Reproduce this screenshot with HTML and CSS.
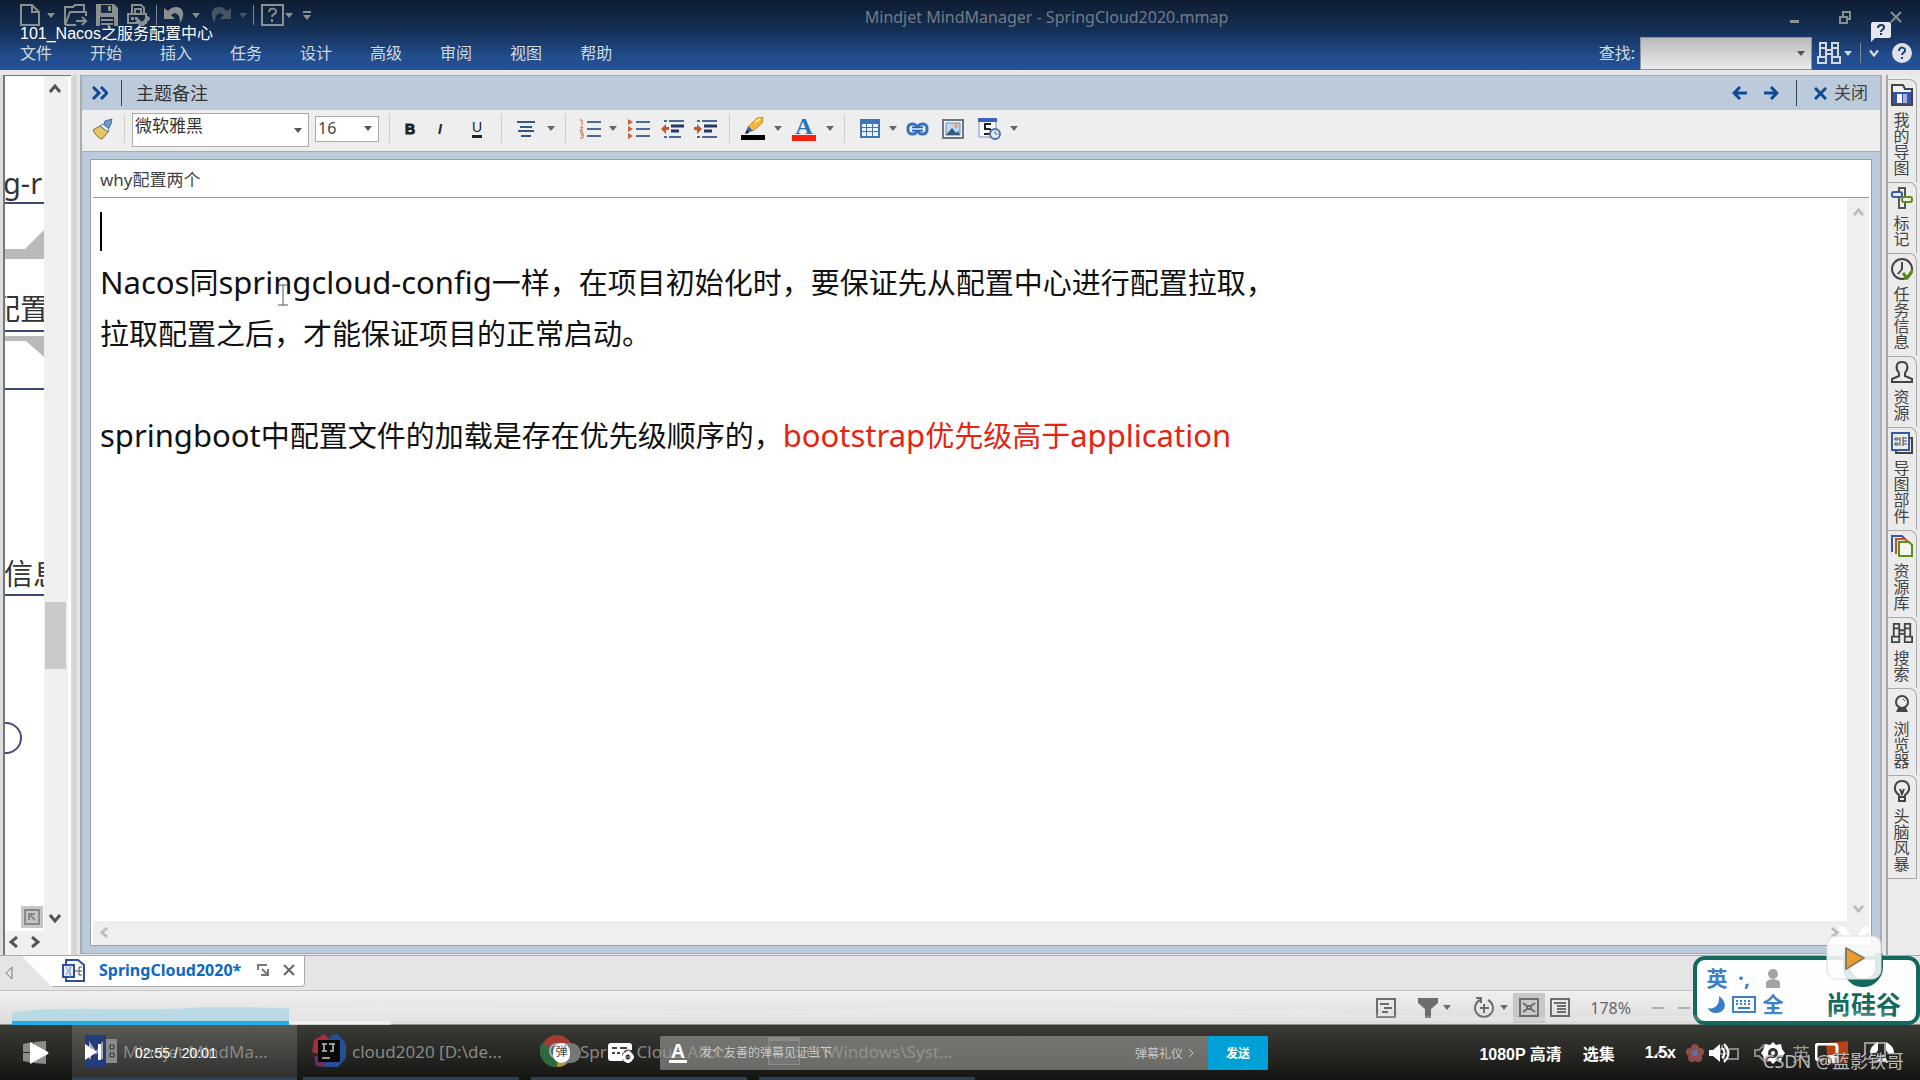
FILE: index.html
```html
<!DOCTYPE html>
<html lang="zh-CN">
<head>
<meta charset="utf-8">
<meta name="viewport" content="width=device-width, initial-scale=1">
<title>101_Nacos之服务配置中心</title>
<link rel="stylesheet" href="styles.css">
</head>
<body>
<svg class="defs" aria-hidden="true">
  <symbol id="caret" viewBox="0 0 8 5"><path d="M0 0h8L4 5z" fill="currentColor"/></symbol>
  <symbol id="chev-up" viewBox="0 0 12 10"><path d="M1 8l5-6 5 6" fill="none" stroke="currentColor" stroke-width="3"/></symbol>
  <symbol id="chev-down" viewBox="0 0 12 10"><path d="M1 2l5 6 5-6" fill="none" stroke="currentColor" stroke-width="3"/></symbol>
  <symbol id="chev-left" viewBox="0 0 10 12"><path d="M8 1L2 6l6 5" fill="none" stroke="currentColor" stroke-width="3"/></symbol>
  <symbol id="chev-right" viewBox="0 0 10 12"><path d="M2 1l6 5-6 5" fill="none" stroke="currentColor" stroke-width="3"/></symbol>
  <symbol id="binoculars" viewBox="0 0 24 22"><g fill="none" stroke="currentColor" stroke-width="2"><path d="M3 1h6v5H3zM15 1h6v5h-6zM3 6v9M21 6v9M9 6v9M15 6v9M9 8h6v4H9zM1 15h8v6H1zM15 15h8v6h-8z"/></g></symbol>
</svg>
<div class="screen">
  <header class="titlebar">
    <div class="quick">
      <button aria-label="新建"><svg width="20" height="22"><path d="M1 1h11l7 7v13H1zM12 1v7h7" fill="none" stroke="currentColor" stroke-width="2"/></svg></button>
      <button aria-label="新建选项"><svg width="8" height="5"><use href="#caret"/></svg></button>
      <button aria-label="打开"><svg width="24" height="22"><path d="M1 21V3h8l2-2h9v6M1 21L6 8h16v4M1 21h11M12 17h9M18 13l4 4-4 4" fill="none" stroke="currentColor" stroke-width="2"/></svg></button>
      <button aria-label="保存"><svg width="22" height="22"><path d="M0 0h18l4 4v18H0z" fill="currentColor"/><path d="M5 1h11v8H5zM4 13h14v9H4z" fill="#12284a"/><path d="M12 2h3v5h-3zM5 15h12v2H5zM5 19h12v2H5z" fill="currentColor"/></svg></button>
      <button aria-label="打印"><svg width="24" height="22"><path d="M6 10V1h9l3 3v6M2 10h18v9H2zM9 5h6v5H9z" fill="none" stroke="currentColor" stroke-width="2"/><path d="M5 13h3v3H5zM9 13h3v3H9z" fill="currentColor"/><path d="M11 16l5 5 7-8" fill="none" stroke="currentColor" stroke-width="4"/></svg></button>
      <i class="rule"></i>
      <button aria-label="撤销"><svg width="21" height="19"><path d="M0 2v11h11L7 9c5-4 9-1 9 8 6-9 3-16-4-16-4 0-6 2-8 4z" fill="currentColor"/></svg></button>
      <button aria-label="撤销选项"><svg width="8" height="5"><use href="#caret"/></svg></button>
      <button class="dim" aria-label="重做"><svg width="21" height="19"><path d="M21 2v11H10l4-4C9 5 5 8 5 17-1 8 2 1 9 1c4 0 6 2 8 4z" fill="currentColor"/></svg></button>
      <button class="dim" aria-label="重做选项"><svg width="8" height="5"><use href="#caret"/></svg></button>
      <i class="rule"></i>
      <button aria-label="帮助"><svg width="23" height="22"><path d="M1 1h21v20H1z" fill="none" stroke="currentColor" stroke-width="2"/><path d="M8 8c0-5 8-4 7 0-1 3-4 2-4 5m0 2v3" fill="none" stroke="currentColor" stroke-width="2"/></svg></button>
      <button aria-label="帮助选项"><svg width="8" height="5"><use href="#caret"/></svg></button>
      <button aria-label="自定义"><svg width="8" height="9"><path d="M0 0h8v2H0zM0 4h8L4 9z" fill="currentColor"/></svg></button>
      <h1 class="app-name">Mindjet MindManager - SpringCloud2020.mmap</h1>
      <div class="win">
        <button aria-label="最小化"><svg width="10" height="12"><path d="M0 9h9v3H0z" fill="currentColor"/></svg></button>
        <button aria-label="还原"><svg width="12" height="13"><path d="M1 6h7v6H1zM4 6V1h7v7H8" fill="none" stroke="currentColor" stroke-width="2"/></svg></button>
        <button aria-label="关闭窗口"><svg width="12" height="12"><path d="M1 1l10 10M11 1L1 11" stroke="currentColor" stroke-width="2"/></svg></button>
      </div>
    </div>
    <nav class="ribbon">
      <a href="#">文件</a><a href="#">开始</a><a href="#">插入</a><a href="#">任务</a><a href="#">设计</a><a href="#">高级</a><a href="#">审阅</a><a href="#">视图</a><a href="#">帮助</a>
      <div class="find">
        <label for="find">查找:</label>
        <span class="combo find-box"><input id="find" type="text"><svg width="8" height="5"><use href="#caret"/></svg></span>
        <button aria-label="搜索"><svg width="24" height="22"><use href="#binoculars"/></svg></button>
        <button class="find-caret" aria-label="搜索选项"><svg width="8" height="5"><use href="#caret"/></svg></button>
        <i class="rule"></i>
        <button class="find-more" aria-label="折叠"><svg width="10" height="8"><use href="#chev-down"/></svg></button>
        <button aria-label="帮助主题"><svg width="20" height="20"><circle cx="10" cy="10" r="10" fill="#dfe2e6"/><path d="M7 8c0-5 7-4 6 0-1 2-3 2-3 4m0 2v2" fill="none" stroke="#1c4079" stroke-width="2"/></svg></button>
      </div>
    </nav>
  </header>

  <main class="workspace">
    <section class="map">
      <div class="canvas">
        <svg width="39" height="850" aria-label="导图">
          <path d="M0 173h20l19-19v29H0zM0 260h39v21L21 265H0z" fill="#bababa"/>
          <path d="M0 127h39M0 255h39M0 313h39M0 519h39" stroke="#3b4a78" stroke-width="2"/>
          <circle cx="1" cy="662" r="15" fill="none" stroke="#4a4a78" stroke-width="2"/>
          <text x="-2" y="118">g-r</text><text x="-14" y="244">配置</text><text x="-1" y="509">信息</text>
        </svg>
        <button class="fit" aria-label="适合窗口"><svg width="16" height="16"><path d="M1 1h14v14H1zM5 11V5h6M5 5l6 6" fill="none" stroke="currentColor" stroke-width="2"/></svg></button>
      </div>
      <div class="map-pan"><svg width="10" height="12"><use href="#chev-left"/></svg><svg width="10" height="12"><use href="#chev-right"/></svg></div>
      <div class="map-scroll"><svg width="12" height="10"><use href="#chev-up"/></svg><i class="thumb"></i><svg width="12" height="10"><use href="#chev-down"/></svg></div>
    </section>

    <section class="notes">
      <header class="notes-head">
        <button aria-label="折叠面板"><svg width="16" height="14"><path d="M1 1l6 6-6 6M9 1l6 6-6 6" fill="none" stroke="currentColor" stroke-width="3"/></svg></button>
        <i class="bar"></i>
        <h2>主题备注</h2>
        <div class="head-right">
          <button aria-label="上一个"><svg width="15" height="14"><path d="M15 7H2M8 1L2 7l6 6" fill="none" stroke="currentColor" stroke-width="3"/></svg></button>
          <button aria-label="下一个"><svg width="15" height="14"><path d="M0 7h13M7 1l6 6-6 6" fill="none" stroke="currentColor" stroke-width="3"/></svg></button>
          <i class="bar"></i>
          <button class="close"><svg width="13" height="13"><path d="M1 1l11 11M12 1L1 12" stroke="currentColor" stroke-width="3"/></svg><span>关闭</span></button>
        </div>
      </header>

      <div class="tools">
        <button aria-label="格式刷"><svg width="21" height="22"><path d="M1 12l7-4 8 6-6 7c-4-1-7-5-9-9z" fill="#e6c763" stroke="#7d6a35"/><path d="M8 8l3-2 6 5-1 3z" fill="#e9eef5" stroke="#67788f"/><path d="M12 6l1-3 7-2-1 5-2 4z" fill="#6f9bd0" stroke="#4a6f9f"/></svg></button>
        <i class="sep"></i>
        <span class="combo font"><select aria-label="字体"><option>微软雅黑</option></select><svg width="8" height="5"><use href="#caret"/></svg></span>
        <span class="combo size"><select aria-label="字号"><option>16</option></select><svg width="8" height="5"><use href="#caret"/></svg></span>
        <i class="sep"></i>
        <button class="glyph bold">B</button>
        <button class="glyph italic">I</button>
        <button class="glyph under">U</button>
        <i class="sep"></i>
        <button aria-label="对齐"><svg width="18" height="16"><path d="M0 1h18M3 6h12M1 10h16M4 15h10" stroke="#35587f" stroke-width="2"/></svg></button>
        <button aria-label="对齐选项"><svg width="8" height="5"><use href="#caret"/></svg></button>
        <i class="sep"></i>
        <button aria-label="编号列表"><svg width="22" height="20"><path d="M8 3h14M8 10h14M8 17h14" stroke="#4d6a8e" stroke-width="2"/><path d="M1 1h2v5M1 8h3L1 12h3M1 14h3v5H1M2 16h2" fill="none" stroke="#c8643c"/></svg></button>
        <button aria-label="编号选项"><svg width="8" height="5"><use href="#caret"/></svg></button>
        <button aria-label="项目符号"><svg width="22" height="20"><path d="M8 3h14M8 10h14M8 17h14" stroke="#4d6a8e" stroke-width="2"/><path d="M0 0l5 3-5 3zM0 7l5 3-5 3zM0 14l5 3-5 3z" fill="#c8643c"/></svg></button>
        <button aria-label="减少缩进"><svg width="24" height="20"><path d="M3 2h3M8 2h15M3 18h3M8 18h12" stroke="#4d6a8e" stroke-width="2"/><path d="M10 7h13M10 12h8" stroke="#1f3a66" stroke-width="3"/><path d="M0 10l5-5v3h3v3H5v4z" fill="#c8552c"/></svg></button>
        <button aria-label="增加缩进"><svg width="24" height="20"><path d="M3 2h3M8 2h15M3 18h3M8 18h15" stroke="#4d6a8e" stroke-width="2"/><path d="M10 7h13M10 12h8" stroke="#1f3a66" stroke-width="3"/><path d="M8 10L3 5v3H0v3h3v4z" fill="#c8552c"/></svg></button>
        <i class="sep"></i>
        <button aria-label="突出显示"><svg width="24" height="24"><path d="M0 18h24v5H0z" fill="#000"/><path d="M7 10L16 1l6-1-1 6-9 8z" fill="#f5b83c" stroke="#c8882a"/><path d="M14 5l5-3" stroke="#fff0b0" stroke-width="2"/><path d="M7 9l5 5-7 2z" fill="#2a69b8"/><path d="M4 17l2-5 2 4z" fill="#123"/></svg></button>
        <button aria-label="突出显示选项"><svg width="8" height="5"><use href="#caret"/></svg></button>
        <button class="font-color" aria-label="字体颜色"><span>A</span></button>
        <button aria-label="颜色选项"><svg width="8" height="5"><use href="#caret"/></svg></button>
        <i class="sep"></i>
        <button aria-label="表格"><svg width="20" height="19"><path d="M0 0h20v19H0z" fill="#3e74b8"/><path d="M2 5h4v3H2zM7 5h5v3H7zM13 5h5v3h-5zM2 9h4v3H2zM7 9h5v3H7zM13 9h5v3h-5zM2 13h4v4H2zM7 13h5v4H7zM13 13h5v4h-5z" fill="#eaf3fc"/></svg></button>
        <button aria-label="表格选项"><svg width="8" height="5"><use href="#caret"/></svg></button>
        <button aria-label="超链接"><svg width="23" height="14"><g fill="none"><rect x="2" y="2" width="9" height="10" rx="4" stroke="#3571bd" stroke-width="3"/><rect x="12" y="2" width="9" height="10" rx="4" stroke="#3571bd" stroke-width="3"/><path d="M6 7h11" stroke="#2a60aa" stroke-width="5"/><path d="M6 7h11" stroke="#a9cdf3" stroke-width="2"/></g></svg></button>
        <button aria-label="图片"><svg width="22" height="20"><path d="M1 1h20v18H1z" fill="#f4f4f4" stroke="#6b7684" stroke-width="2"/><path d="M4 4h14v12H4z" fill="#bcd9f5" stroke="#7188a6"/><path d="M4 16l6-7 4 5 2-2 2 4z" fill="#39597f"/><circle cx="14" cy="7" r="2" fill="#efa06f"/></svg></button>
        <button aria-label="日期时间"><svg width="23" height="22"><path d="M1 1h17v18H1z" fill="#f5f8fc" stroke="#7e94b5"/><path d="M0 0h19v4H0z" fill="#3964bd"/><path d="M13 6H7v5h4c3 0 3 5-1 5H6" fill="none" stroke="#222" stroke-width="2"/><circle cx="17" cy="16" r="5" fill="#e4ecf7" stroke="#54719e" stroke-width="2"/><path d="M17 13v3h3" fill="none" stroke="#54719e"/></svg></button>
        <button aria-label="日期选项"><svg width="8" height="5"><use href="#caret"/></svg></button>
      </div>

      <div class="page">
        <div class="sheet">
          <input class="topic" type="text" value="why配置两个" aria-label="主题">
          <div class="sheet-body">
            <article class="note" contenteditable="true" spellcheck="false">
              <p><i class="text-caret"></i></p>
              <p><span class="latin">Nacos</span>同<span class="latin">springcloud-config</span>一样，在项目初始化时，要保证先从配置中心进行配置拉取，</p>
              <p>拉取配置之后，才能保证项目的正常启动。</p>
              <p></p>
              <p><span class="latin">springboot</span>中配置文件的加载是存在优先级顺序的，<span class="red"><span class="latin">bootstrap</span>优先级高于<span class="latin">application</span></span></p>
              <svg class="ibeam" width="10" height="22"><path d="M0 1h10M0 21h10M5 1v20" stroke="#555" stroke-width="1"/></svg>
            </article>
            <div class="vscroll"><svg width="11" height="9"><use href="#chev-up"/></svg><svg width="11" height="9"><use href="#chev-down"/></svg></div>
          </div>
          <div class="hscroll"><svg width="9" height="11"><use href="#chev-left"/></svg><svg width="9" height="11"><use href="#chev-right"/></svg></div>
        </div>
      </div>
    </section>

    <nav class="side">
      <a href="#"><svg width="22" height="22"><path d="M1 1h11l2 4h7v16H1z" fill="#f2f2f2" stroke="#444" stroke-width="2"/><path d="M2 8h18v12H2z" fill="#3553b5"/><path d="M6 10h5v9H6z" fill="#fff"/><path d="M12 10h4v9h-4z" fill="#aab3d2"/></svg><span>我的导图</span></a>
      <a href="#"><svg width="22" height="22"><path d="M8 1h6v20H8z" fill="#eee" stroke="#555" stroke-width="2"/><rect x="1" y="5" width="10" height="5" rx="2" fill="#eee" stroke="#3759a8" stroke-width="2"/><rect x="11" y="10" width="10" height="5" rx="2" fill="#eee" stroke="#5a8f1e" stroke-width="2"/></svg><span>标记</span></a>
      <a href="#"><svg width="22" height="22"><circle cx="11" cy="11" r="10" fill="none" stroke="#444" stroke-width="2"/><path d="M11 4v7l-4 5" fill="none" stroke="#444" stroke-width="2"/><path d="M12 15l4 5 6-8" fill="none" stroke="#4f8f14" stroke-width="3"/></svg><span>任务信息</span></a>
      <a href="#"><svg width="22" height="22"><path d="M8 12C4 7 5 1 11 1s7 6 3 11v3l7 3v3H1v-3l7-3z" fill="none" stroke="#444" stroke-width="2"/></svg><span>资源</span></a>
      <a href="#"><svg width="22" height="22"><path d="M5 18v3h16V6h-3" fill="none" stroke="#444" stroke-width="2"/><path d="M1 1h17v17H1z" fill="#eee" stroke="#3759a8" stroke-width="2"/><path d="M4 6h3v2H4zM4 11h3v2H4zM12 6h4M12 9h4M12 12h4M9 5v9M12 5v9" fill="none" stroke="#444"/></svg><span>导图部件</span></a>
      <a href="#"><svg width="22" height="22"><path d="M1 17V1h10l3 3" fill="none" stroke="#3759a8" stroke-width="2"/><path d="M5 19V4h9l3 3" fill="none" stroke="#d14b2c" stroke-width="2"/><path d="M8 7h10l3 3v11H8z" fill="#f4f4f0" stroke="#5a8f1e" stroke-width="2"/></svg><span>资源库</span></a>
      <a href="#"><svg width="22" height="22"><use href="#binoculars"/></svg><span>搜索</span></a>
      <a href="#"><svg width="22" height="22"><circle cx="11" cy="9" r="6" fill="none" stroke="#444" stroke-width="2"/><path d="M12 6l2 2" stroke="#444"/><path d="M7 15h8l2 4H5z" fill="#444"/></svg><span>浏览器</span></a>
      <a href="#"><svg width="22" height="22"><path d="M8 15C0 9 5 1 11 1s11 8 3 14v6H8zM8 17h6M9 9l2 5 2-5" fill="none" stroke="#444" stroke-width="2"/></svg><span>头脑风暴</span></a>
    </nav>
  </main>

  <div class="tabs">
    <svg width="8" height="14" class="tab-prev"><path d="M7 1v12L1 7z" fill="none" stroke="#777"/></svg>
    <div class="tab-edge"></div>
    <div class="tab">
      <svg width="24" height="23"><path d="M4 1h12l6 5v16H4z" fill="#fff" stroke="#2d4e9a" stroke-width="2"/><path d="M1 6h11v12H1z" fill="#e6eaf4" stroke="#2d4e9a" stroke-width="2"/><path d="M4 8l5 8M9 8l-5 8M8 6v12" stroke="#8b9bc8"/><path d="M12 12h4M20 8h-3v8h3M17 12h3" fill="none" stroke="#444"/></svg>
      <a href="#">SpringCloud2020*</a>
      <svg width="12" height="12"><path d="M1 6V1h9M4 11h7V5M5 5l5 5" fill="none" stroke="#777" stroke-width="2"/></svg>
      <button aria-label="关闭标签"><svg width="12" height="12"><path d="M1 1l10 10M11 1L1 11" stroke="#666" stroke-width="2"/></svg></button>
    </div>
  </div>

  <footer class="status">
    <button aria-label="导航"><svg width="20" height="20"><path d="M1 1h18v18H1z" fill="none" stroke="currentColor" stroke-width="2"/><path d="M4 6h9M8 10h8M6 14h6" stroke="currentColor" stroke-width="2"/></svg></button>
    <button class="pair" aria-label="筛选"><svg width="20" height="20"><path d="M0 0h20v5l-7 6v9H7v-9L0 5z" fill="currentColor"/></svg><svg width="8" height="5"><use href="#caret"/></svg></button>
    <button class="pair" aria-label="详细级别"><svg width="22" height="22"><path d="M7 3a9 9 0 1 0 8 0M11 7v9M7 11h9M3 1h5v5" fill="none" stroke="currentColor" stroke-width="2"/></svg><svg width="8" height="5"><use href="#caret"/></svg></button>
    <button class="on" aria-label="适合地图"><svg width="20" height="19"><path d="M1 1h18v17H1zM4 5l4 3M16 5l-4 3M4 14l4-3M16 14l-4-3M8 8h4v3H8z" fill="none" stroke="currentColor" stroke-width="2"/></svg></button>
    <button aria-label="大纲"><svg width="20" height="19"><path d="M1 1h18v17H1zM4 5h12M7 8h9M7 11h9M7 14h9" fill="none" stroke="currentColor" stroke-width="2"/></svg></button>
    <span class="zoom">178%</span>
    <span class="zoom-line"></span><span class="zoom-line"></span>
  </footer>

  <nav class="taskbar">
    <button class="start" aria-label="开始菜单"><svg width="23" height="23"><path d="M0 3l10-2v10H0zM11 1l12-1v11H11zM0 12h10v10L0 20zM11 12h12v11l-12-1z" fill="#8c8c89"/></svg></button>
    <button class="task active"><svg width="32" height="32"><path d="M0 0h21v32H0z" fill="#243c7c"/><path d="M21 4h11v24H21z" fill="#8c8c8c"/><path d="M5 24V9l6 9 6-9v15" fill="none" stroke="#aaa" stroke-width="2"/><path d="M25 10h4v4h-4zM25 18h4v4h-4z" fill="none" stroke="#333"/></svg><span>Mindjet MindMa...</span></button>
    <button class="task"><svg width="34" height="34"><path d="M2 6L12 0l6 6-6 16-12-4z" fill="#a52e3e"/><path d="M18 2l8-2 8 10v14l-8 9H12z" fill="#24509a"/><path d="M2 22h8l4 11-10-1z" fill="#6c2f62"/><path d="M6 6h22v22H6z" fill="#080808"/><path d="M10 10h5M12 10v7M10 17h5M17 10h6M21 10v7h-3M10 24h8" fill="none" stroke="#999" stroke-width="2"/></svg><span>cloud2020 [D:\de...</span></button>
    <button class="task"><svg width="34" height="34"><circle cx="17" cy="17" r="16" fill="#a13d33"/><path d="M2 9a16 16 0 0 0 15 24l6-11z" fill="#2c6b3d"/><path d="M17 33a16 16 0 0 0 15-22H19z" fill="#b99432"/><circle cx="17" cy="17" r="8" fill="#aaa"/><circle cx="17" cy="17" r="6" fill="#355f9d"/></svg><span>Spring Cloud Alib...</span></button>
    <button class="task"><svg width="32" height="28"><path d="M0 0h32v28H0z" fill="#777"/><path d="M1 4h30v23H1z" fill="#3a3a3a"/></svg><span>C:\Windows\Syst...</span></button>
    <div class="tray">
      <svg width="18" height="12"><path d="M1 11l8-9 8 9" fill="none" stroke="#aaa" stroke-width="2"/></svg>
      <svg width="18" height="18"><g fill="#8f4c4a"><circle cx="9" cy="4" r="4"/><circle cx="4" cy="8" r="4"/><circle cx="14" cy="8" r="4"/><circle cx="6" cy="14" r="4"/><circle cx="12" cy="14" r="4"/></g><circle cx="9" cy="9" r="3" fill="#5676a3"/></svg>
      <svg width="20" height="18"><path d="M1 5h7v5H1zM3 1v4M6 1v4M5 10v6M10 5h9v10H8" fill="none" stroke="#888" stroke-width="2"/></svg>
      <svg width="23" height="18"><path d="M1 6h4l5-5v16l-5-5H1zM13 6c2 2 2 4 0 6M16 3c4 4 4 8 0 12M19 1c5 5 5 11 0 16" fill="none" stroke="#888" stroke-width="2"/></svg>
      <span class="ime-mode">英</span>
      <svg width="24" height="24"><path d="M1 2l22-2v22L3 24z" fill="#b64216"/></svg>
      <svg width="22" height="22"><path d="M1 1h20v16h-6l-4 4v-4H1z" fill="none" stroke="#999" stroke-width="2"/></svg>
    </div>
  </nav>

  <div class="ime">
    <div class="ime-keys">
      <b>英</b><b>·,</b>
      <svg width="14" height="19"><circle cx="7" cy="5" r="5" fill="#a3a3a3"/><path d="M0 19v-5c0-5 14-5 14 0v5z" fill="#a3a3a3"/></svg>
      <svg width="18" height="17"><path d="M11 0c10 7 6 17-3 17-4 0-7-2-8-5 7 2 12-4 11-12z" fill="#3b7fc8"/></svg>
      <svg width="24" height="17"><path d="M1 1h22v15H1z" fill="none" stroke="#3b7fc8" stroke-width="2"/><path d="M4 5h16M4 8h16" stroke="#3b7fc8" stroke-width="2" stroke-dasharray="2 2"/><path d="M6 12h12" stroke="#3b7fc8" stroke-width="2"/></svg>
      <b>全</b>
    </div>
    <div class="brand"><svg width="40" height="42"><rect x="4" y="-10" width="32" height="40" rx="16" fill="none" stroke="#14695e" stroke-width="8"/></svg><strong>尚硅谷</strong></div>
    <svg class="tv" width="56" height="54" viewBox="0 0 56 54"><path d="M16 3l6 8M40 3l-6 8" stroke="#fff" stroke-width="6" stroke-linecap="round"/><rect x="1" y="10" width="54" height="43" rx="9" fill="#fff" fill-opacity=".86" stroke="#ddd"/><path d="M20 22l18 10-18 11z" fill="#ed9a2d" stroke="#8b7c5f" stroke-width="2" stroke-linejoin="round"/></svg>
  </div>

  <div class="video-title">101_Nacos之服务配置中心</div>
  <svg class="feedback" width="20" height="20"><path d="M2 0h16q2 0 2 2v12q0 2-2 2H4l-4 4V2q0-2 2-2z" fill="#e4e8ee"/><path d="M7 6c0-4 7-4 6 0-1 2-3 2-3 4m0 1v2" fill="none" stroke="#173460" stroke-width="2"/></svg>

  <div class="player">
    <div class="progress">
      <svg class="heat" viewBox="0 0 1896 22" preserveAspectRatio="none"><path d="M0 22V9Q20 2 90 3T180 1t97 1v20z" fill="#9fd5e8" fill-opacity=".6"/><path d="M277 22V2Q430-3 600 4t260-2 300 1 60-8 60 8 600 0v19z" fill="#fff" fill-opacity=".18"/></svg>
      <div class="track"><i class="played"></i><i class="buffered"></i></div>
    </div>
    <div class="controls">
      <button class="play" aria-label="播放"><svg width="20" height="24"><path d="M1 1l18 10q1 1 0 2L1 23z" fill="#fff"/></svg></button>
      <button class="next" aria-label="下一集"><svg width="17" height="16"><path d="M0 0l12 8-12 8zM13 0h3v16h-3z" fill="#fff"/></svg></button>
      <span class="time">02:55 / 20:01</span>
      <div class="danmaku">
        <label class="toggle"><input type="checkbox" aria-label="弹幕开关"><span>弹</span></label>
        <button class="dm-set" aria-label="弹幕设置"><svg width="26" height="20"><path d="M3 0h18q3 0 3 3v4q-8-2-10 5l1 6H3q-3 0-3-3V3q0-3 3-3z" fill="#fff"/><path d="M4 5h5M12 5h7M4 10h3M9 10h3" stroke="#444" stroke-width="2"/><circle cx="20" cy="14" r="4" fill="none" stroke="#fff" stroke-width="3"/><path d="M20 8v2M20 18v2M14 14h2M24 14h2" stroke="#fff" stroke-width="3"/></svg></button>
        <div class="send-bar">
          <button aria-label="弹幕样式" class="dm-style">A</button>
          <input type="text" placeholder="发个友善的弹幕见证当下" aria-label="弹幕">
          <a href="#">弹幕礼仪<svg width="6" height="10"><path d="M1 1l4 4-4 4" fill="none" stroke="currentColor"/></svg></a>
          <button class="send">发送</button>
        </div>
      </div>
      <div class="options">
        <button>1080P 高清</button>
        <button>选集</button>
        <button class="speed">1.5x</button>
        <button aria-label="音量"><svg width="22" height="20"><path d="M0 7h4l7-6v18l-7-6H0z" fill="#fff"/><path d="M13 5q5 5 0 10M15 1q9 9 0 18" fill="none" stroke="#fff" stroke-width="2"/></svg></button>
        <button aria-label="设置"><svg width="24" height="24"><path d="M12 1l3 3 5-1 1 5 3 4-3 4-1 5-5-1-3 3-3-3-5 1-1-5-3-4 3-4 1-5 5 1z" fill="#fff"/><circle cx="12" cy="12" r="5" fill="#33332f"/><circle cx="12" cy="12" r="2" fill="#fff"/></svg></button>
        <button aria-label="画中画"><svg width="24" height="20"><path d="M9 17H4q-3 0-3-3V4q0-3 3-3h15q3 0 3 3v6" fill="none" stroke="#fff" stroke-width="3"/><path d="M13 12h11v8H13z" fill="#fff"/></svg></button>
        <button aria-label="退出全屏"><svg width="26" height="24"><path d="M9 1v7q0 3-3 4H1q0-7 8-11zM17 1v7q0 3 3 4h5q0-7-8-11zM7 22l3-7q3-3 6 0l3 7z" fill="#fff"/></svg></button>
      </div>
    </div>
  </div>
  <div class="watermark">CSDN @蓝影铁哥</div>
</div>
</body>
</html>
```
FILE: styles.css
```css
* { box-sizing: border-box; }
body {
  margin: 0;
  background: #e9e9ea;
  font-family: "Noto Sans", "Noto Sans CJK SC", sans-serif;
  font-size: 16px;
  color: #333;
}
button, input, select { font: inherit; color: inherit; margin: 0; padding: 0; border: 0; background: none; outline: 0; }
a { color: inherit; text-decoration: none; }
h1, h2, p { margin: 0; font-weight: 400; }
svg { display: block; flex: none; }
.defs { position: absolute; width: 0; height: 0; }
.screen { position: relative; min-height: 100vh; display: flex; flex-direction: column; overflow: hidden; }

/* title bar and ribbon */
.titlebar { height: 70px; background: linear-gradient(#0d1c31, #153058 45%, #214c8c 80%, #24519a); }
.quick {
  display: grid;
  grid-template-columns: 27px 16px 34px 28px 33px 4px 33px 10px 39px 6px 14px 25px 8px 28px 1fr 132px;
  align-items: center;
  justify-items: center;
  height: 34px;
  padding: 0 8px 4px 16px;
  color: #8b8f8e;
}
.quick .dim { opacity: .45; }
.rule { width: 1px; height: 20px; background: #7d8796; }
.app-name { grid-column: 15; justify-self: center; font-size: 16px; line-height: 24px; color: #757b84; padding-right: 8px; padding-top: 4px; }
.win { display: flex; justify-content: space-between; align-items: center; width: 112px; padding-top: 4px; }
.ribbon { display: flex; align-items: center; gap: 38px; height: 36px; padding: 2px 8px 0 20px; color: #d3d8dc; line-height: 24px; }
.find { display: flex; align-items: center; margin-left: auto; }
.find label { margin-right: 5px; }
.find-box { width: 172px; height: 33px; margin-right: 5px; background: linear-gradient(#b9b9b9, #ececec); border: 1px solid #8d949c; }
.combo { display: flex; position: relative; align-items: center; color: #555; }
.combo input, .combo select { width: 100%; height: 100%; appearance: none; }
.combo svg { position: absolute; right: 6px; }
.find-caret { margin: 0 8px 0 3px; }
.find .rule { margin-right: 8px; }
.find-more { margin-right: 13px; }

/* workspace */
.workspace { flex: 1; display: flex; padding-top: 5px; background: #e6e6e8; }
.map {
  display: grid;
  grid-template: 1fr 24px / 39px 27px;
  width: 80px;
  padding: 0 9px 0 5px;
  background: linear-gradient(90deg, #ddd 3px, #777 3px, #777 5px, #f0f0f0 5px, #f0f0f0 68px, #fff 68px, #fff 71px, #dcdcdc 71px, #d2d2d2 76px, #e6e6e6 77px);
}
.canvas { position: relative; overflow: hidden; background: #fff; border-top: 1px solid #777; }
.canvas > svg { position: absolute; top: 0; left: 0; }
.canvas text { font-size: 29px; fill: #333; }
.fit { position: absolute; right: 1px; bottom: 3px; width: 22px; height: 22px; padding: 3px; background: #c6c6c6; color: #888; }
.map-pan { grid-row: 2; display: flex; align-items: center; justify-content: space-between; padding: 0 4px 2px; color: #555; }
.map-scroll { grid-column: 2; grid-row: 1; display: flex; flex-direction: column; padding: 8px 6px 8px 1px; align-items: center; border-top: 1px solid #777; color: #555; }
.thumb { width: 21px; height: 67px; margin: 508px 0 auto; background: #c9c9c9; }

.notes { flex: 1; min-width: 0; display: flex; flex-direction: column; border: 2px solid #a9adb2; border-top-width: 1px; border-bottom-width: 1px; background: #bccbdb; margin-bottom: 1px; }
.notes-head { display: flex; align-items: center; height: 34px; padding: 0 12px 0 10px; color: #114a94; }
.bar { width: 1px; height: 26px; background: #33475e; }
.notes-head > .bar { margin: 0 14px 0 13px; }
.notes-head h2 { font-size: 18px; line-height: 26px; color: #333; }
.head-right { display: flex; align-items: center; gap: 17px; margin-left: auto; }
.close { display: flex; align-items: center; gap: 7px; }
.close span { font-size: 17px; line-height: 24px; color: #444; }

.tools {
  display: grid;
  grid-template-columns: 40px 4px 189px 64px 20px 22px 38px 36px 12px 38px 11px 18px 31px 16px 35px 33px 34px 12px 36px 14px 38px 14px 14px 38px 8px 41px 30px 42px 8px;
  align-items: center;
  justify-items: center;
  height: 42px;
  padding-bottom: 9px;
  background: #eee;
  border-bottom: 1px solid #a9adb2;
  color: #666;
}
.sep { width: 1px; height: 29px; background: #cfcfcf; }
.tools .combo { background: #fff; border: 1px solid #aaa; color: #555; }
.font { width: 177px; height: 34px; align-self: start; margin-top: 3px; }
.font select { padding: 0 0 12px 2px; font-size: 17px; color: #333; }
.size { width: 64px; height: 26px; }
.size select { padding: 0 0 2px 2px; color: #444; }
.glyph { font-family: "Liberation Sans", sans-serif; font-size: 14px; line-height: 16px; color: #222; }
.bold { font-weight: 700; -webkit-text-stroke: 1px #222; }
.italic { font-style: italic; font-weight: 700; }
.under { border-bottom: 3px solid #222; }
.font-color { width: 24px; height: 24px; border-bottom: 6px solid #f6200c; }
.font-color span { display: block; font: 700 24px/18px "Liberation Serif", serif; color: #2373bd; }

.page { flex: 1; display: flex; padding: 7px 8px; }
.sheet { flex: 1; min-width: 0; display: flex; flex-direction: column; background: #fff; border: 1px solid #9a9fa5; }
.topic { height: 38px; margin: 0 2px; padding-left: 7px; border-bottom: 1px solid #999; font-size: 17px; color: #444; }
.sheet-body { flex: 1; display: flex; padding-right: 2px; }
.note { position: relative; flex: 1; padding: 8px 9px; outline: 0; font-size: 29px; line-height: 51px; color: #111; }
.note p { min-height: 51px; }
.note .latin { font-size: 31px; line-height: 1; }
.red { color: #e8230f; }
.text-caret { display: block; width: 2px; height: 51px; border: solid #fff; border-width: 6px 0; background: #000; }
.ibeam { position: absolute; left: 187px; top: 86px; }
.vscroll { display: flex; flex-direction: column; align-items: center; justify-content: space-between; width: 22px; padding: 10px 0 8px; background: #efefef; color: #bbb; }
.hscroll { display: flex; align-items: center; justify-content: space-between; height: 24px; margin: 0 2px; padding: 0 30px 2px 7px; background: #efefef; color: #bbb; }

.side { width: 34px; margin-left: 4px; padding: 4px 3px 0 0; border-left: 2px solid #a6a6a6; background: #ebebeb; }
.side a { display: flex; flex-direction: column; align-items: center; gap: 6px; padding: 4px 0 6px; border: 1px solid #aaa; border-left: 0; border-bottom: 0; border-top-right-radius: 8px; color: #444; }
.side a:last-child { border-bottom: 1px solid #aaa; }
.side span { writing-mode: vertical-rl; font-size: 16px; line-height: 22px; padding-right: 3px; }

/* document tabs, status bar */
.tabs { display: flex; height: 36px; border-top: 1px solid #aaa; border-bottom: 1px solid #c4c4c4; background: #e5e5e5; }
.tab-prev { margin: 10px 9px 0 5px; }
.tab-edge { width: 30px; height: 31px; background: #fff; clip-path: polygon(0 0, 100% 0, 100% 100%); }
.tab { display: flex; align-items: center; height: 31px; padding: 0 9px 2px 10px; background: #fff; border: 1px solid #aaa; border-width: 0 1px 1px 0; border-bottom-right-radius: 4px; }
.tab a { margin: 0 16px 0 13px; font-size: 16px; font-weight: 700; color: #0c68c2; }
.tab button { margin-left: 14px; }
.status { display: flex; justify-content: flex-end; align-items: center; height: 33px; padding-right: 230px; background: linear-gradient(#f0f0f0, #dcdcdc); color: #6d6d6d; }
.pair { display: flex; align-items: center; gap: 5px; margin-left: 22px; }
.on { display: grid; place-items: center; width: 32px; height: 30px; margin: 0 5px; background: #c8c8c8; }
.zoom { margin: 0 21px 0 20px; font-size: 16px; line-height: 22px; color: #666; }
.zoom-line { width: 12px; height: 2px; margin-right: 14px; background: #b0b0b0; }
.zoom-line:last-child { margin-right: 0; }

/* windows task bar */
.taskbar { display: flex; height: 56px; border-top: 1px solid #8d8f88; background: linear-gradient(#3b3b36, #141412); color: #898987; }
.start { width: 72px; padding-left: 23px; }
.task { display: flex; align-items: center; gap: 6px; width: 216px; margin-right: 12px; padding: 0 0 0 9px; border-bottom: 3px solid #2b4155; }
.task span { font-size: 17px; white-space: nowrap; }
.task.active { width: 225px; margin-right: 6px; padding-left: 13px; background: linear-gradient(#5a5a56, #30302e); }
.tray { display: flex; align-items: center; gap: 15px; margin-left: auto; padding-right: 34px; }
.ime-mode { font-size: 18px; color: #999; }

/* input method and logo overlay */
.ime { position: absolute; right: 0; bottom: 55px; display: flex; justify-content: space-between; width: 227px; height: 69px; padding: 5px 15px 0 10px; background: #fdfefe; border: 4px solid #14695e; border-radius: 12px; }
.ime-keys { display: grid; grid-template-columns: 20px 34px 24px; grid-template-rows: 26px 26px; align-items: center; justify-items: center; color: #3b7fc8; font-size: 21px; line-height: 26px; }
.brand { display: flex; flex-direction: column; align-items: center; margin-top: -12px; color: #14695e; }
.brand svg { height: 34px; }
.brand strong { font-size: 25px; line-height: 34px; }
.tv { position: absolute; right: 34px; bottom: 41px; }

/* video player overlay */
.video-title { position: absolute; left: 20px; top: 22px; font: 16px/24px "Liberation Sans", "Noto Sans CJK SC", sans-serif; color: #fff; }
.feedback { position: absolute; right: 29px; top: 22px; }
.player { position: absolute; left: 0; right: 0; bottom: 0; color: #fff; font-family: "Liberation Sans", "Noto Sans CJK SC", sans-serif; }
.progress { margin: 0 12px; }
.heat { width: 100%; height: 14px; }
.track { display: flex; height: 4px; }
.played { width: 14.6%; background: #23ade5; }
.buffered { width: 5.4%; background: rgba(255, 255, 255, .6); }
.controls { display: flex; align-items: center; height: 55px; padding: 0 25px 0 29px; }
.play { margin-right: 36px; }
.next { margin-right: 33px; padding-bottom: 2px; }
.time { width: 418px; font-size: 14px; line-height: 20px; }
.danmaku { display: flex; align-items: center; }
.toggle { position: relative; width: 28px; height: 20px; margin-right: 27px; border-radius: 10px; background: #777; }
.toggle input { position: absolute; inset: 0; width: 28px; height: 20px; opacity: 0; }
.toggle span { display: block; width: 17px; height: 20px; border-radius: 10px; background: #fff; color: #444; font-size: 12px; line-height: 18px; text-align: center; }
.dm-set { margin-right: 26px; }
.send-bar { display: flex; align-items: center; width: 608px; height: 34px; border-radius: 2px; overflow: hidden; background: rgba(150, 150, 148, .65); color: #c8c8c7; font-size: 12px; }
.dm-style { margin: 0 13px 0 9px; width: 18px; border-bottom: 3px solid #fff; font-size: 20px; font-weight: 700; line-height: 18px; color: #fff; }
.send-bar input { flex: 1; min-width: 0; height: 100%; }
.send-bar input::placeholder { color: #cbcbc9; opacity: 1; }
.send-bar a { display: flex; align-items: center; gap: 5px; margin-right: 14px; }
.send { width: 60px; height: 100%; background: #00a1d6; color: #fff; font-weight: 700; }
.options { display: flex; align-items: center; gap: 30px; margin-left: auto; font-size: 16px; font-weight: 700; }
.options button:nth-child(2) { margin-left: -9px; }
.speed { margin-right: 3px; }
.watermark { position: absolute; right: 16px; bottom: 6px; font-size: 18px; line-height: 26px; color: #b8b8b6; text-shadow: 1px 1px 1px #222; }
```
